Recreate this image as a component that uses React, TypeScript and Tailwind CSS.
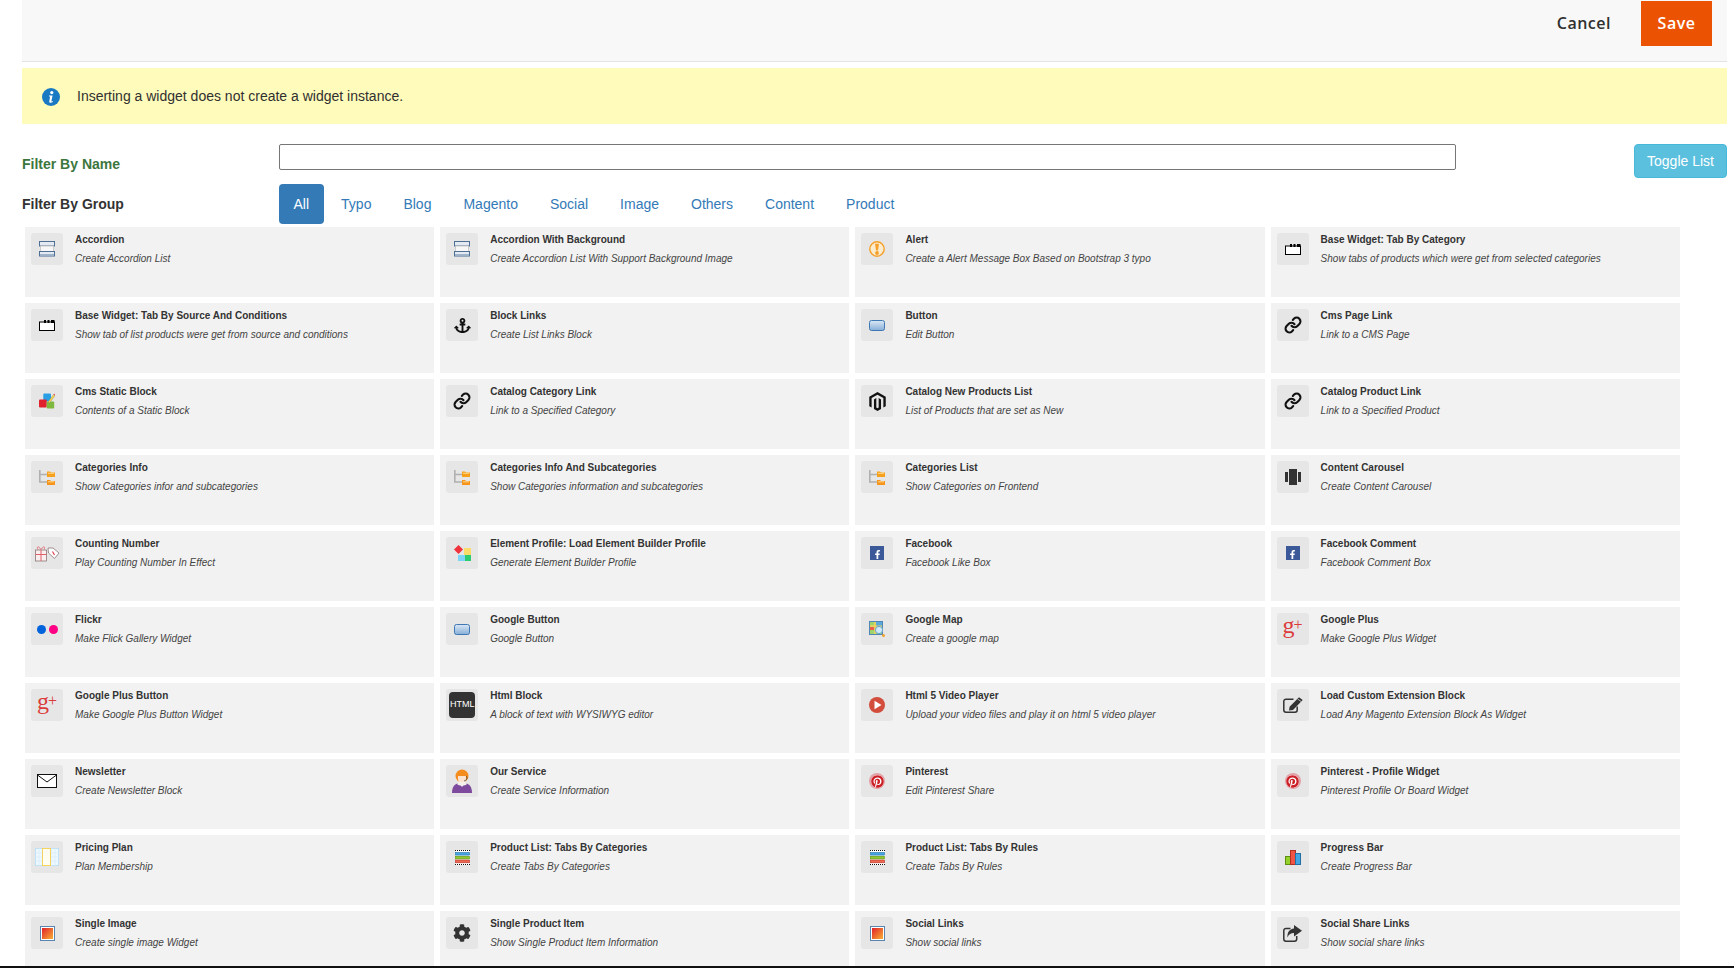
import type { ReactNode } from 'react';
import { FaAnchor, FaCog, FaFacebookF, FaMagento, FaPinterest } from 'react-icons/fa';
import { Link } from 'lucide-react';

const accordionIcon = (
  <svg width="16" height="16" viewBox="0 0 16 16" fill="none">
    <rect x="0.5" y="0.5" width="15" height="4.5" fill="#e3eaf2" stroke="#4f6f95" />
    <rect x="1.5" y="5" width="13" height="5.5" fill="#f7f7f7" stroke="#bdbdbd" strokeWidth="0.7" />
    <rect x="0.5" y="10.5" width="15" height="4.5" fill="#e3eaf2" stroke="#4f6f95" />
    <rect x="1" y="13" width="14" height="1.5" fill="#9fb3c9" />
  </svg>
);

const tabIcon = (
  <svg width="16" height="11" viewBox="0 0 16 11" fill="none">
    <rect x="0.5" y="2" width="15" height="8.5" fill="#fff" stroke="#000" />
    <rect x="5" y="0" width="2" height="3" fill="#000" />
    <rect x="8.5" y="0" width="2" height="3" fill="#000" />
    <rect x="12" y="0" width="3.5" height="3" fill="#000" />
  </svg>
);

const blocksIcon = (
  <svg width="16" height="16" viewBox="0 0 16 16">
    <rect x="4.3" y="0.5" width="7.7" height="8" rx="1" fill="#2a9fe3" />
    <rect x="0" y="6.5" width="7.7" height="8" rx="1" fill="#e0202c" />
    <rect x="7.7" y="8.5" width="7.5" height="7" rx="1" fill="#7fb83e" />
    <path d="M9 9 L14.5 1.5 L16 2.8 L10.5 10 Z" fill="#f4d74a" stroke="#666" strokeWidth="0.3" />
    <path d="M14.5 1.5 L15.3 0.4 L16 1.2 L16 2.8 Z" fill="#e8556a" />
  </svg>
);

const treeIcon = (
  <svg width="16" height="15" viewBox="0 0 16 15" fill="none">
    <path d="M0.8 0 V12 H8 M0.8 4.5 H8" stroke="#b0b0b0" strokeWidth="1.6" />
    <path d="M8 1.5 H11 L12 2.5 H16 V7 H8 Z" fill="#f7a01c" />
    <path d="M8 10 H11 L12 11 H16 V15 H8 Z" fill="#f7941c" />
    <rect x="9" y="2.8" width="6" height="1" fill="#ffd98a" />
    <rect x="9" y="11.3" width="6" height="1" fill="#ffd98a" />
  </svg>
);

const giftIcon = (
  <svg width="24" height="17" viewBox="0 0 24 17" fill="none">
    <rect x="0.5" y="5" width="11" height="11" fill="#fbeeee" stroke="#8a7777" strokeWidth="0.8" />
    <path d="M6 5 V16 M0.5 9.5 H11.5" stroke="#e0606a" />
    <path d="M6 4.5 C3 0 1.5 2 3 4.5 M6 4.5 C9 0 10.5 2 9 4.5" stroke="#e0606a" strokeWidth="0.8" />
    <path d="M13 3 H18 L24 8 L19.5 13.5 L13.5 8 Z" fill="#fff" stroke="#8a7777" strokeWidth="0.8" />
    <path d="M17.5 6.5 L19.5 10" stroke="#e0404a" strokeWidth="1.2" />
  </svg>
);

const flickrIcon = (
  <svg width="21" height="9" viewBox="0 0 21 9">
    <circle cx="4.5" cy="4.5" r="4.5" fill="#0063dc" />
    <circle cx="16.5" cy="4.5" r="4.5" fill="#ff0084" />
  </svg>
);

const envelopeIcon = (
  <svg width="20" height="14" viewBox="0 0 20 14" fill="none">
    <rect x="0.5" y="0.5" width="19" height="13" fill="#fff" stroke="#111" />
    <path d="M0.5 1 L10 8 L19.5 1" stroke="#111" />
  </svg>
);

const pricingIcon = (
  <svg width="24" height="18" viewBox="0 0 24 18" fill="none">
    <rect x="0.5" y="0.5" width="23" height="17" fill="#eef8ff" stroke="#bfe0f5" />
    <path d="M0 5 H24 M0 9 H24 M0 13 H24 M16 0 V18 M20 0 V18 M4 0 V18" stroke="#d6ecfa" strokeWidth="0.7" />
    <rect x="7.5" y="0.5" width="8" height="17" fill="#fffdf0" stroke="#f4d35e" />
  </svg>
);

const productListIcon = (
  <svg width="15" height="15" viewBox="0 0 15 15" fill="none">
    <rect x="0" y="0" width="15" height="15" fill="#fff" />
    <path d="M0 0.5 H15 M0 14.5 H15" stroke="#111" strokeDasharray="1 1" />
    <rect x="0.5" y="2.5" width="14" height="2.6" fill="#45a5e0" stroke="#2070a8" strokeWidth="0.6" />
    <rect x="0.5" y="6.3" width="14" height="2.6" fill="#8ecb2e" stroke="#5f8f10" strokeWidth="0.6" />
    <rect x="0.5" y="10" width="14" height="2.8" fill="#ee6a55" stroke="#b03022" strokeWidth="0.6" />
  </svg>
);

const progressIcon = (
  <svg width="16" height="15" viewBox="0 0 16 15" fill="none">
    <rect x="0.5" y="6.5" width="5" height="8" fill="#93d02a" stroke="#5f8f10" />
    <rect x="5.5" y="0.5" width="5" height="14" fill="#ee5544" stroke="#b03022" />
    <rect x="10.5" y="3.5" width="5" height="11" fill="#45a5e0" stroke="#2070a8" />
  </svg>
);

const imageIcon = (
  <svg width="15" height="15" viewBox="0 0 15 15" fill="none">
    <defs>
      <linearGradient id="imageFill" x1="0" y1="0" x2="1" y2="1">
        <stop offset="0" stopColor="#e0202c" />
        <stop offset="1" stopColor="#f8b133" />
      </linearGradient>
    </defs>
    <rect x="0.5" y="0.5" width="14" height="14" fill="#fff" stroke="#5a85b0" />
    <rect x="2" y="2" width="11" height="11" fill="url(#imageFill)" />
  </svg>
);

const buttonIcon = (
  <svg width="16" height="11" viewBox="0 0 16 11">
    <defs>
      <linearGradient id="buttonFill" x1="0" y1="0" x2="0" y2="1">
        <stop offset="0" stopColor="#dbe8f5" />
        <stop offset="1" stopColor="#86aed8" />
      </linearGradient>
    </defs>
    <rect x="0.5" y="0.5" width="15" height="10" rx="2" fill="url(#buttonFill)" stroke="#3f78b2" />
  </svg>
);

const alertIcon = (
  <svg width="16" height="16" viewBox="0 0 16 16" fill="none">
    <circle cx="8" cy="8" r="7.2" fill="#fbeccf" stroke="#f5a02a" strokeWidth="1.4" />
    <path d="M6 2.8 H10 L9 9.5 H7 Z" fill="#f5a02a" />
    <circle cx="8" cy="12" r="1.9" fill="#f5a02a" />
  </svg>
);

const profileIcon = (
  <svg width="17" height="16" viewBox="0 0 17 16">
    <rect x="10" y="3" width="7" height="7" fill="#fbdc6a" />
    <rect x="4" y="10" width="7" height="6" fill="#7ed4f7" />
    <rect x="11" y="10" width="6" height="6" fill="#2ecc71" />
    <path d="M4.5 0 L9 4.5 L4.5 9 L0 4.5 Z" fill="#f0323c" />
  </svg>
);

const mapIcon = (
  <svg width="16" height="16" viewBox="0 0 16 16" fill="none">
    <rect x="0.5" y="0.5" width="13" height="13" fill="#9fd36b" stroke="#4f86b5" />
    <path d="M1 5 H13 M6 1 V13" stroke="#f4d35e" strokeWidth="1.6" />
    <rect x="1" y="6" width="4" height="3" fill="#e8604c" />
    <rect x="7" y="1" width="6" height="3.5" fill="#5aa9dc" />
    <circle cx="10" cy="9" r="3.6" fill="#cfe9f7" stroke="#6aa4cc" />
    <circle cx="14.5" cy="14.5" r="1.5" fill="#f5a22d" />
  </svg>
);

const videoIcon = (
  <svg width="16" height="16" viewBox="0 0 16 16">
    <circle cx="8" cy="8" r="8" fill="#d24d3c" />
    <path d="M5.5 3.8 L12.5 8 L5.5 12.2 Z" fill="#fff" />
  </svg>
);

const serviceIcon = (
  <svg width="20" height="24" viewBox="0 0 20 24">
    <path d="M0 24 C0 17 3 15 7 14 H13 C17 15 20 17 20 24 Z" fill="#7d4a9e" />
    <path d="M7 14 L10 18 L13 14 Z" fill="#f3f3f3" />
    <circle cx="10" cy="7" r="6.5" fill="#f58d1e" />
    <path d="M6 7 H14 V10 C14 13 12 15 10 15 C8 15 6 13 6 10 Z" fill="#fbe3cf" />
    <path d="M5 15 C7 17 13 17 15 15 L13 13 H7 Z" fill="#f5f0ea" />
    <path d="M14 7 C16 9 15 11 12 12" stroke="#444" strokeWidth="0.8" fill="none" />
  </svg>
);

const carouselIcon = (
  <svg width="16" height="16" viewBox="0 0 16 16" fill="#333">
    <rect x="0" y="3" width="3" height="10" />
    <rect x="4" y="0" width="8" height="16" />
    <rect x="13" y="3" width="3" height="10" />
  </svg>
);

const editIcon = (
  <svg width="20" height="16" viewBox="0 0 20 16" fill="none">
    <path d="M10.5 2.2 H3 A2.2 2.2 0 0 0 0.8 4.4 V13 A2.2 2.2 0 0 0 3 15.2 H12 A2.2 2.2 0 0 0 14.2 13 V9.5" stroke="#333" strokeWidth="1.5" />
    <path d="M16 0.3 L19.7 3 L10 13 L6 13.6 L6.6 9.7 Z" fill="#333" />
    <path d="M14.6 2 L18.2 4.6" stroke="#e6e6e6" strokeWidth="0.7" />
  </svg>
);

const shareIcon = (
  <svg width="19" height="17" viewBox="0 0 19 17" fill="none">
    <path d="M7.5 3.4 H3 A2.2 2.2 0 0 0 0.8 5.6 V14 A2.2 2.2 0 0 0 3 16.2 H11.5 A2.2 2.2 0 0 0 13.7 14 V11" stroke="#333" strokeWidth="1.5" />
    <path d="M11 0 L19 5.8 L11 11.5 V8 C7.5 8 5.5 9.5 4.5 12.5 C4 7.5 6.5 4 11 3.5 Z" fill="#333" />
  </svg>
);

const plusIcon = (
  <div className="flex -translate-y-[4px] items-baseline font-['Liberation_Serif',serif] leading-none text-[#dc3b3b]">
    <span className="text-[24px]">g</span>
    <span className="-ml-[1px] -translate-y-[3px] text-[16px]">+</span>
  </div>
);

const htmlIcon = (
  <div className="flex h-[26px] w-[26px] items-center justify-center rounded-[4px] bg-[#333] text-[9px] text-white">HTML</div>
);

const facebookIcon = (
  <div className="flex h-[14px] w-[14px] items-end justify-center bg-[#3b5998] text-white">
    <FaFacebookF size={9} className="mb-[1px]" />
  </div>
);

const pinterestIcon = (
  <div className="flex h-[16px] w-[16px] items-center justify-center rounded-full bg-[#e2a3a8]">
    <div className="flex h-[13px] w-[13px] items-center justify-center rounded-full bg-white">
      <FaPinterest size={13} className="text-[#cb2027]" />
    </div>
  </div>
);

const anchorIcon = <FaAnchor size={17} className="text-[#111]" />;
const linkIcon = <Link size={18} strokeWidth={2.8} className="text-[#111]" />;
const magentoIcon = <FaMagento size={19} className="text-[#111]" />;
const gearIcon = <FaCog size={18} className="text-[#333]" />;

const widgets: { name: string; desc: string; icon: ReactNode }[] = [
  { name: 'Accordion', desc: 'Create Accordion List', icon: accordionIcon },
  { name: 'Accordion With Background', desc: 'Create Accordion List With Support Background Image', icon: accordionIcon },
  { name: 'Alert', desc: 'Create a Alert Message Box Based on Bootstrap 3 typo', icon: alertIcon },
  { name: 'Base Widget: Tab By Category', desc: 'Show tabs of products which were get from selected categories', icon: tabIcon },
  { name: 'Base Widget: Tab By Source And Conditions', desc: 'Show tab of list products were get from source and conditions', icon: tabIcon },
  { name: 'Block Links', desc: 'Create List Links Block', icon: anchorIcon },
  { name: 'Button', desc: 'Edit Button', icon: buttonIcon },
  { name: 'Cms Page Link', desc: 'Link to a CMS Page', icon: linkIcon },
  { name: 'Cms Static Block', desc: 'Contents of a Static Block', icon: blocksIcon },
  { name: 'Catalog Category Link', desc: 'Link to a Specified Category', icon: linkIcon },
  { name: 'Catalog New Products List', desc: 'List of Products that are set as New', icon: magentoIcon },
  { name: 'Catalog Product Link', desc: 'Link to a Specified Product', icon: linkIcon },
  { name: 'Categories Info', desc: 'Show Categories infor and subcategories', icon: treeIcon },
  { name: 'Categories Info And Subcategories', desc: 'Show Categories information and subcategories', icon: treeIcon },
  { name: 'Categories List', desc: 'Show Categories on Frontend', icon: treeIcon },
  { name: 'Content Carousel', desc: 'Create Content Carousel', icon: carouselIcon },
  { name: 'Counting Number', desc: 'Play Counting Number In Effect', icon: giftIcon },
  { name: 'Element Profile: Load Element Builder Profile', desc: 'Generate Element Builder Profile', icon: profileIcon },
  { name: 'Facebook', desc: 'Facebook Like Box', icon: facebookIcon },
  { name: 'Facebook Comment', desc: 'Facebook Comment Box', icon: facebookIcon },
  { name: 'Flickr', desc: 'Make Flick Gallery Widget', icon: flickrIcon },
  { name: 'Google Button', desc: 'Google Button', icon: buttonIcon },
  { name: 'Google Map', desc: 'Create a google map', icon: mapIcon },
  { name: 'Google Plus', desc: 'Make Google Plus Widget', icon: plusIcon },
  { name: 'Google Plus Button', desc: 'Make Google Plus Button Widget', icon: plusIcon },
  { name: 'Html Block', desc: 'A block of text with WYSIWYG editor', icon: htmlIcon },
  { name: 'Html 5 Video Player', desc: 'Upload your video files and play it on html 5 video player', icon: videoIcon },
  { name: 'Load Custom Extension Block', desc: 'Load Any Magento Extension Block As Widget', icon: editIcon },
  { name: 'Newsletter', desc: 'Create Newsletter Block', icon: envelopeIcon },
  { name: 'Our Service', desc: 'Create Service Information', icon: serviceIcon },
  { name: 'Pinterest', desc: 'Edit Pinterest Share', icon: pinterestIcon },
  { name: 'Pinterest - Profile Widget', desc: 'Pinterest Profile Or Board Widget', icon: pinterestIcon },
  { name: 'Pricing Plan', desc: 'Plan Membership', icon: pricingIcon },
  { name: 'Product List: Tabs By Categories', desc: 'Create Tabs By Categories', icon: productListIcon },
  { name: 'Product List: Tabs By Rules', desc: 'Create Tabs By Rules', icon: productListIcon },
  { name: 'Progress Bar', desc: 'Create Progress Bar', icon: progressIcon },
  { name: 'Single Image', desc: 'Create single image Widget', icon: imageIcon },
  { name: 'Single Product Item', desc: 'Show Single Product Item Information', icon: gearIcon },
  { name: 'Social Links', desc: 'Show social links', icon: imageIcon },
  { name: 'Social Share Links', desc: 'Show social share links', icon: shareIcon },
];

const groups = ['Typo', 'Blog', 'Magento', 'Social', 'Image', 'Others', 'Content', 'Product'];

export default function App() {
  return (
    <div className="flex h-[968px] flex-col overflow-hidden bg-white font-['Liberation_Sans',sans-serif] text-[14px] text-[#333]">
      <div className="flex min-h-0 flex-1 flex-col pl-[22px] pr-[7px]">
        <div className="flex h-[62px] shrink-0 items-start justify-end border-b border-[#e3e3e3] bg-[#f8f8f8] pr-[15px] pt-[1px] font-['Open_Sans',sans-serif] text-[16px] font-semibold tracking-[0.5px]">
          <span className="mr-[30px] mt-[10px] text-[#303030]">Cancel</span>
          <button className="h-[45px] w-[71px] bg-[#eb5202] pb-[2px] text-white">Save</button>
        </div>

        <div className="mt-[6px] flex h-[56px] shrink-0 items-center bg-[#fffbbb] pl-[20px] text-[#303030]">
          <svg width="18" height="18" viewBox="0 0 18 18" className="mt-[2px]">
            <circle cx="9" cy="9" r="9" fill="#1979c3" />
            <circle cx="9.8" cy="4.6" r="1.6" fill="#fff" />
            <path d="M7 7.5 H10.6 L9.4 13 C9.3 13.6 9.8 13.6 10.8 13.1 L10.8 14 C9.3 15 6.9 15.3 7.3 13.2 L8.1 8.6 H7 Z" fill="#fff" />
          </svg>
          <span className="ml-[17px]">Inserting a widget does not create a widget instance.</span>
        </div>

        <div className="mt-[20px] flex h-[40px] shrink-0 items-start">
          <label className="mt-[10px] w-[257px] font-bold text-[#3c763d]">Filter By Name</label>
          <input className="h-[26px] w-[1177px] rounded-[2px] border border-[#767676] bg-white" />
          <button className="ml-auto h-[34px] w-[93px] rounded-[4px] border border-[#46b8da] bg-[#5bc0de] text-white">Toggle List</button>
        </div>

        <div className="flex h-[43px] shrink-0 items-start">
          <label className="mt-[10px] w-[256.5px] font-bold">Filter By Group</label>
          <nav className="flex">
            <a className="rounded-[4px] bg-[#337ab7] px-[15px] py-[10px] leading-[20px] text-white">All</a>
            {groups.map(group => (
              <a key={group} className="ml-[2px] px-[15px] py-[10px] leading-[20px] text-[#337ab7]">{group}</a>
            ))}
          </nav>
        </div>

        <div className="ml-[3px] grid w-[1654.8px] grid-cols-4 gap-[6px]">
          {widgets.map(widget => (
            <div key={widget.name} className="flex h-[70px] items-start gap-[12px] bg-[#f2f2f2] p-[6px]">
              <div className="flex h-[32px] w-[32px] shrink-0 items-center justify-center rounded-[3px] bg-[#e6e6e6]">
                {widget.icon}
              </div>
              <div className="pt-[1px]">
                <div className="text-[10px] font-bold leading-[12px] text-[#333]">{widget.name}</div>
                <div className="mt-[7px] text-[10px] italic leading-[12px] text-[#444]">{widget.desc}</div>
              </div>
            </div>
          ))}
        </div>
      </div>
      <div className="h-[2px] shrink-0 bg-[#111]" />
    </div>
  );
}
